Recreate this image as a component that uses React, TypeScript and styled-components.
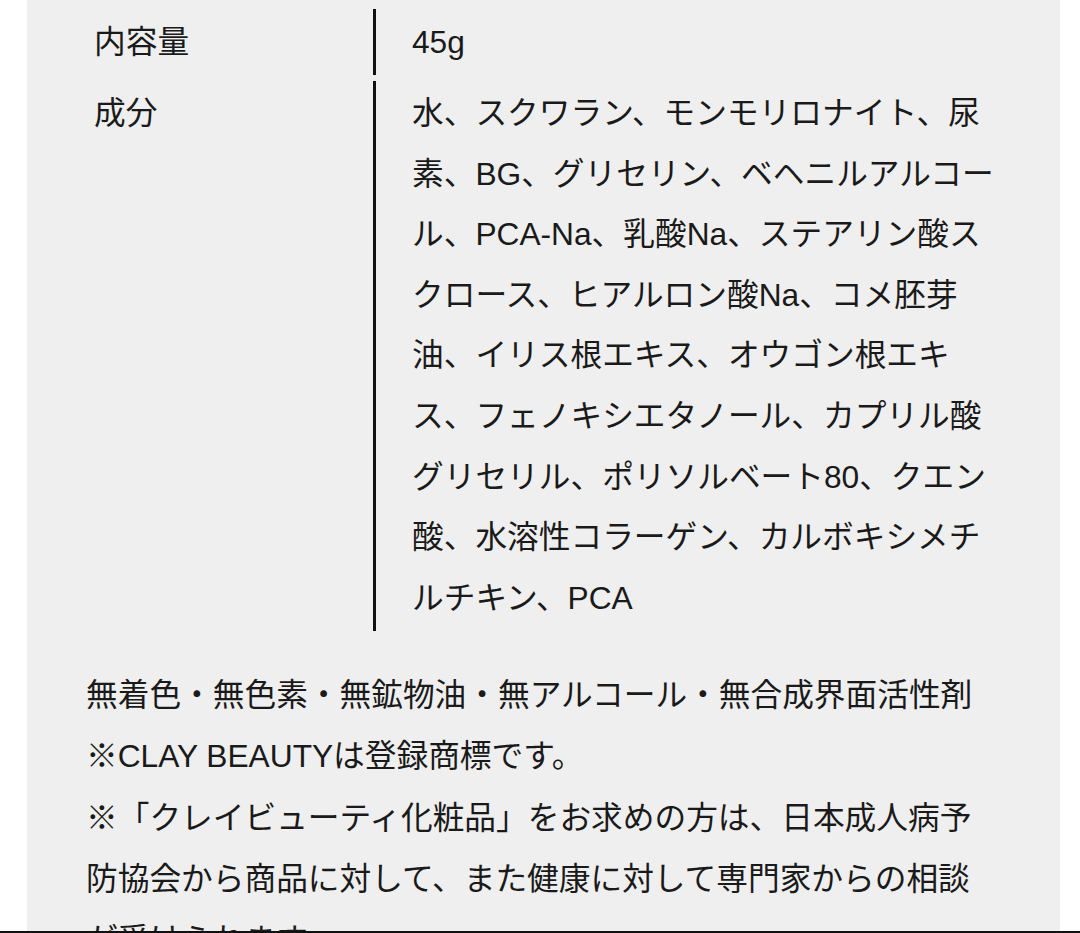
import React from "react";
import styled, { createGlobalStyle } from "styled-components";

const GlobalStyle = createGlobalStyle`
  html, body {
    margin: 0;
    padding: 0;
    background: #ffffff;
  }
  body {
    font-family: "Liberation Sans", "Noto Sans CJK JP", sans-serif;
    color: #1a1a1a;
  }
`;

const Page = styled.div`
  display: flex;
  flex-direction: column;
  width: 1080px;
  height: 933px;
  overflow: hidden;
`;

const PanelWrap = styled.div`
  display: flex;
  height: 931px;
  padding: 0 20px 0 27px;
  box-sizing: border-box;
`;

const Panel = styled.section`
  flex: 1;
  background: #efefef;
  padding: 9px 58px 0 59px;
  box-sizing: border-box;
  overflow: hidden;
  font-size: 31.7px;
  line-height: 60.6px;
  color: #1a1a1a;
`;

const SpecTable = styled.dl`
  display: grid;
  grid-template-columns: 287px 1fr;
  row-gap: 6px;
  margin: 0;
`;

const Label = styled.dt`
  margin: 0;
  padding: 2.5px 0 2.5px 8px;
  font-weight: 400;
`;

const Value = styled.dd`
  margin: 0;
  border-left: 3px solid #111111;
  padding: 2.5px 0 2.5px 36px;
  line-break: strict;
`;

const Notes = styled.div`
  margin-top: 34px;
  max-width: 900px;
  line-height: 61.3px;
`;

const Note = styled.p`
  margin: 0;
`;

const BottomRule = styled.div`
  height: 2px;
  background: #111111;
`;

const specs = [
  { label: "内容量", value: "45g" },
  {
    label: "成分",
    value:
      "水、スクワラン、モンモリロナイト、尿素、BG、グリセリン、ベヘニルアルコール、PCA-Na、乳酸Na、ステアリン酸スクロース、ヒアルロン酸Na、コメ胚芽油、イリス根エキス、オウゴン根エキス、フェノキシエタノール、カプリル酸グリセリル、ポリソルベート80、クエン酸、水溶性コラーゲン、カルボキシメチルチキン、PCA",
  },
];

const notes = [
  "無着色・無色素・無鉱物油・無アルコール・無合成界面活性剤",
  "※CLAY BEAUTYは登録商標です。",
  "※「クレイビューティ化粧品」をお求めの方は、日本成人病予防協会から商品に対して、また健康に対して専門家からの相談が受けられます。",
];

export default function App() {
  return (
    <>
      <GlobalStyle />
      <Page>
        <PanelWrap>
          <Panel>
            <SpecTable>
              {specs.map((s) => (
                <React.Fragment key={s.label}>
                  <Label>{s.label}</Label>
                  <Value>{s.value}</Value>
                </React.Fragment>
              ))}
            </SpecTable>
            <Notes>
              {notes.map((n) => (
                <Note key={n}>{n}</Note>
              ))}
            </Notes>
          </Panel>
        </PanelWrap>
        <BottomRule />
      </Page>
    </>
  );
}
